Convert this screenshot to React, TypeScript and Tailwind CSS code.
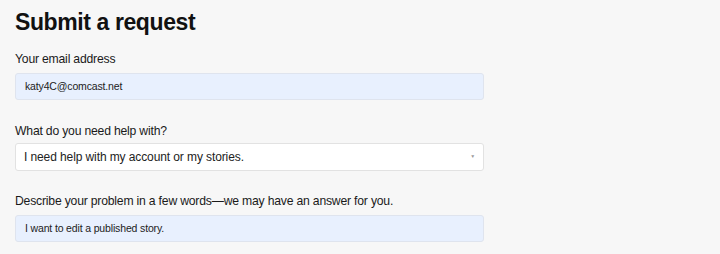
export default function App() {
  return (
    <div
      className="h-[254px] w-[720px] overflow-hidden bg-[#f7f7f7] px-[15px] text-[#1a1a1a]"
      style={{ fontFamily: "'Liberation Sans', Arial, sans-serif" }}
    >
      <h1 className="pt-[8px] text-[23px] font-bold leading-[28px] tracking-[-0.4px] text-[#111]">
        Submit a request
      </h1>

      <form className="w-[469px]">
        {/* email */}
        <label className="mt-[15px] block text-[12.2px] leading-[16px] tracking-[-0.2px]">
          Your email address
        </label>
        <div className="mt-[6px] flex h-[27px] items-center rounded-[3px] border border-[#dfe4ee] bg-[#e8f0fe] px-[9px] text-[10.5px] tracking-[-0.15px] text-[#222]">
          katy4C@comcast.net
        </div>

        {/* category */}
        <label className="mt-[23px] block text-[12.2px] leading-[16px] tracking-[-0.2px]">
          What do you need help with?
        </label>
        <div className="mt-[4px] flex h-[28px] items-center justify-between rounded-[3px] border border-[#e2e2e2] bg-white pl-[8px] pr-[8px] text-[12px] tracking-[-0.1px] text-[#222]">
          <span>I need help with my account or my stories.</span>
          <span className="text-[5px] text-[#999]">▼</span>
        </div>

        {/* description */}
        <label className="mt-[22px] block text-[12.2px] leading-[16px] tracking-[-0.2px]">
          Describe your problem in a few words—we may have an answer for you.
        </label>
        <div className="mt-[6px] flex h-[27px] items-center rounded-[3px] border border-[#dfe4ee] bg-[#e8f0fe] px-[9px] text-[10.5px] tracking-[-0.15px] text-[#222]">
          I want to edit a published story.
        </div>
      </form>
    </div>
  );
}
